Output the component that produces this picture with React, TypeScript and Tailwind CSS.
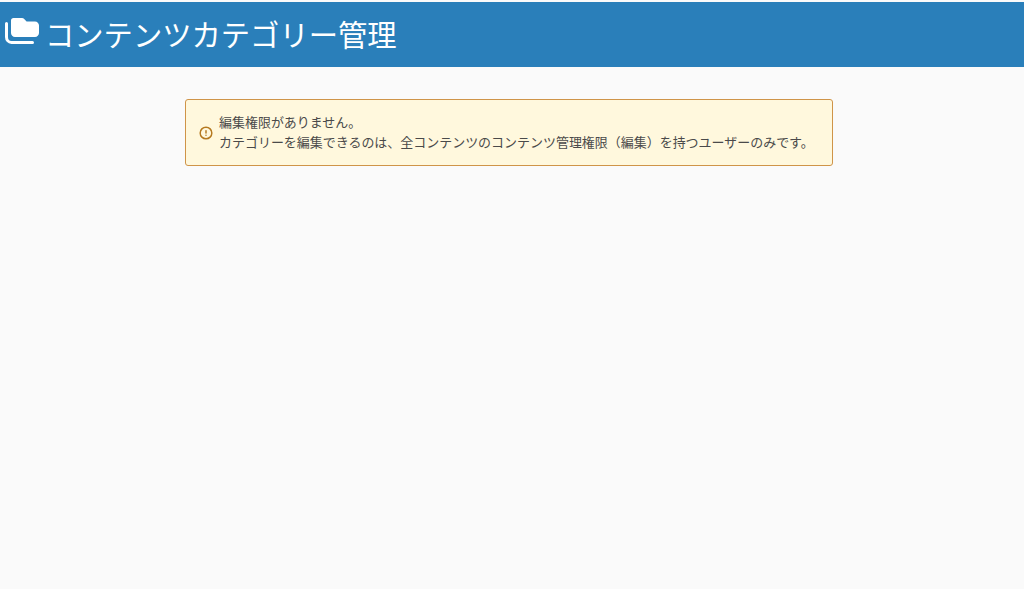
import { CircleAlert } from 'lucide-react';

function FoldersIcon() {
  return (
    <svg width="34" height="28" viewBox="0 0 34 28" fill="none" className="shrink-0 mb-[3px]">
      <path d="M6 2.500C6 1.100 7 0 8.500 0H17c1 0 1.600.4 2.200 1l2.400 2.500H30c2.200 0 4 1.800 4 4V15c0 2.200-1.800 4-4 4H10c-2.200 0-4-1.800-4-4V2.500Z" fill="#fff" />
      <path d="M1.500 5.500V19c0 3 2 5.500 5 5.500H27.500" stroke="#fff" strokeWidth="3" strokeLinecap="round" />
    </svg>
  );
}

export default function App() {
  return (
    <div className="min-h-[589px] bg-[#fafafa] pt-[2px] font-['Noto_Sans_CJK_JP','Noto_Sans',sans-serif]">
      <header className="h-[65px] bg-[#2a7fba] flex items-center pl-[5px] pb-[2px] gap-[6px] text-white">
        <FoldersIcon />
        <h1 className="text-[29.3px] font-normal leading-none">コンテンツカテゴリー管理</h1>
      </header>
      <main className="w-[648px] ml-[185px] mt-[32px]">
        <div className="h-[67px] flex items-center gap-[6px] pl-[13px] pb-[1px] bg-[#fff8dd] border border-[#cf9448] rounded-[3px] text-[12.98px] leading-[20px] text-[#4a4a4a]">
          <CircleAlert size={14} color="#b5791f" strokeWidth={2.5} className="shrink-0 mt-[2px]" />
          <p>
            編集権限がありません。
            <br />
            カテゴリーを編集できるのは、全コンテンツのコンテンツ管理権限（編集）を持つユーザーのみです。
          </p>
        </div>
      </main>
    </div>
  );
}
